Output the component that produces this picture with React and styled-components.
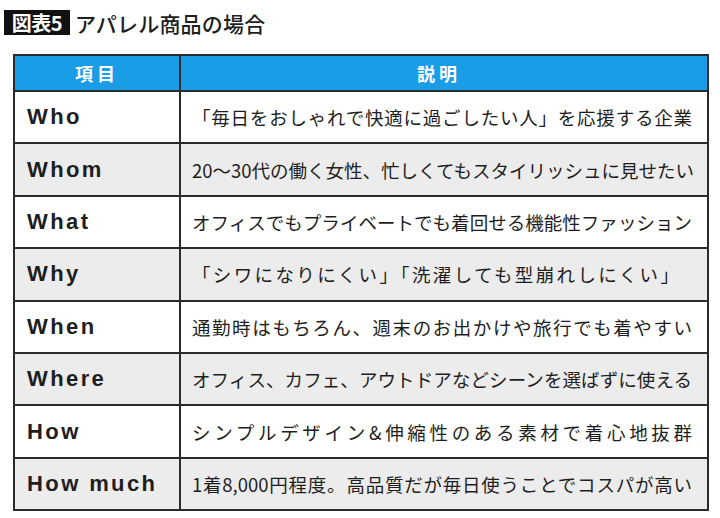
import React from 'react';
import styled, { createGlobalStyle } from 'styled-components';

const GlobalStyle = createGlobalStyle`
  body {
    margin: 0;
    background: #fff;
    font-family: "Noto Sans CJK JP", "Noto Sans", sans-serif;
    color: #222;
  }
`;

const Page = styled.div`
  width: 720px;
  height: 518px;
  padding: 10px 11px 0 4px;
  box-sizing: border-box;
`;

const Title = styled.h1`
  display: flex;
  align-items: center;
  gap: 5px;
  margin: 0;
  height: 25px;
  font-size: 21px;
  font-weight: 500;
  color: #1e1e1e;
  letter-spacing: 0.2px;
`;

const Badge = styled.span`
  display: flex;
  align-items: center;
  justify-content: center;
  width: 66px;
  height: 25px;
  background: #111;
  color: #fff;
  font-weight: 700;
  font-size: 20px;
  letter-spacing: -0.5px;
`;

const Table = styled.div`
  margin: 19px 0 0 9px;
  width: 696px;
  border: 2px solid #2b2b2b;
  box-sizing: border-box;
  display: grid;
  grid-template-columns: 164px 1fr;
`;

const HeadCell = styled.div`
  height: 34px;
  background: #199de6;
  color: #fff;
  font-weight: 700;
  font-size: 18px;
  letter-spacing: 4px;
  display: flex;
  align-items: center;
  justify-content: center;
  border-left: ${(p) => (p.$first ? 'none' : '2px solid #2b2b2b')};
  padding-right: ${(p) => (p.$first ? '0' : '10px')};
`;

const KeyCell = styled.div`
  height: 50.4px;
  border-top: 2px solid #2b2b2b;
  background: ${(p) => (p.$alt ? '#ececec' : '#fff')};
  display: flex;
  align-items: center;
  padding-left: 12px;
  font-family: "Liberation Sans", Arial, sans-serif;
  font-weight: 700;
  font-size: 22px;
  letter-spacing: 2.4px;
  color: #1e1e1e;
`;

const DescCell = styled.div`
  height: 50.4px;
  border-top: 2px solid #2b2b2b;
  border-left: 2px solid #2b2b2b;
  background: ${(p) => (p.$alt ? '#ececec' : '#fff')};
  display: flex;
  align-items: center;
  padding-left: 11px;
  color: #1e1e1e;
`;

const Desc = styled.span`
  display: block;
  width: ${(p) => p.$w}px;
  font-size: 18.5px;
  white-space: nowrap;
  text-align: justify;
  text-align-last: justify;
  letter-spacing: ${(p) => p.$ls || 0}px;
`;

const rows = [
  ['Who', '「毎日をおしゃれで快適に過ごしたい人」を応援する企業', 500],
  ['Whom', '20～30代の働く女性、忙しくてもスタイリッシュに見せたい', 502],
  ['What', 'オフィスでもプライベートでも着回せる機能性ファッション', 500],
  ['Why', '「シワになりにくい」「洗濯しても型崩れしにくい」', 487],
  ['When', '通勤時はもちろん、週末のお出かけや旅行でも着やすい', 500],
  ['Where', 'オフィス、カフェ、アウトドアなどシーンを選ばずに使える', 500],
  ['How', 'シンプルデザイン&伸縮性のある素材で着心地抜群', 500],
  ['How much', '1着8,000円程度。高品質だが毎日使うことでコスパが高い', 500],
];

export default function App() {
  return (
    <Page>
      <GlobalStyle />
      <Title>
        <Badge>図表5</Badge>
        アパレル商品の場合
      </Title>
      <Table>
        <HeadCell $first>項目</HeadCell>
        <HeadCell>説明</HeadCell>
        {rows.map(([key, desc, w], i) => (
          <React.Fragment key={key}>
            <KeyCell $alt={i % 2 === 1}>{key}</KeyCell>
            <DescCell $alt={i % 2 === 1}>
              <Desc $w={w}>{desc}</Desc>
            </DescCell>
          </React.Fragment>
        ))}
      </Table>
    </Page>
  );
}
